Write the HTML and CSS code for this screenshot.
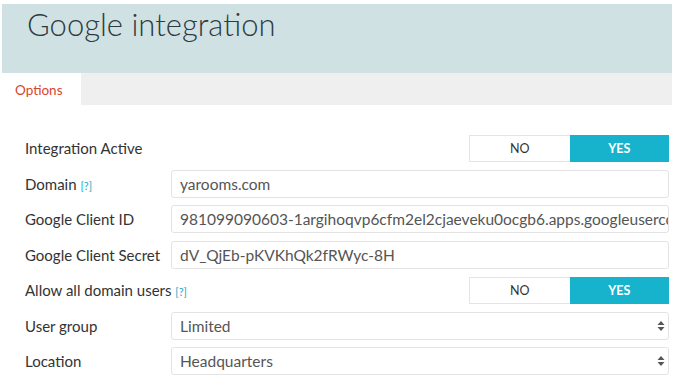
FILE: index.html
```html
<!DOCTYPE html>
<html>
<head>
<meta charset="utf-8">
<link rel="stylesheet" href="styles.css">
</head>
<body>
<div class="page">
  <div class="header"><h1>Google integration</h1></div>
  <div class="tabs"><div class="tab active">Options</div></div>
  <div class="form">
    <div class="row">
      <div class="label">Integration Active</div>
      <div class="field right"><div class="toggle"><span class="no">NO</span><span class="yes">YES</span></div></div>
    </div>
    <div class="row">
      <div class="label">Domain <span class="help">[?]</span></div>
      <div class="field"><div class="input">yarooms.com</div></div>
    </div>
    <div class="row">
      <div class="label">Google Client ID</div>
      <div class="field"><div class="input">981099090603-1argihoqvp6cfm2el2cjaeveku0ocgb6.apps.googleusercontent.com</div></div>
    </div>
    <div class="row">
      <div class="label">Google Client Secret</div>
      <div class="field"><div class="input">dV_QjEb-pKVKhQk2fRWyc-8H</div></div>
    </div>
    <div class="row">
      <div class="label">Allow all domain users <span class="help">[?]</span></div>
      <div class="field right"><div class="toggle"><span class="no">NO</span><span class="yes">YES</span></div></div>
    </div>
    <div class="row">
      <div class="label">User group</div>
      <div class="field"><div class="input select">Limited<svg class="arrows" width="8" height="12" viewBox="0 0 8 12"><path d="M4 1 L7.5 5 L0.5 5 Z M4 11 L7.5 7 L0.5 7 Z" fill="#555"/></svg></div></div>
    </div>
    <div class="row">
      <div class="label">Location</div>
      <div class="field"><div class="input select">Headquarters<svg class="arrows" width="8" height="12" viewBox="0 0 8 12"><path d="M4 1 L7.5 5 L0.5 5 Z M4 11 L7.5 7 L0.5 7 Z" fill="#555"/></svg></div></div>
    </div>
  </div>
</div>
</body>
</html>
```
FILE: styles.css
```css
html, body { margin: 0; padding: 0; background: #fff; }
body { font-family: Lato, "Open Sans", sans-serif; color: #333; }
.page { padding: 4px 2px 0 2px; width: 670px; }
.header { background: #d0e1e4; height: 69px; }
.header h1 { margin: 0; padding: 2px 0 0 25px; font-weight: 300; font-size: 31px; line-height: 36px; color: #2e3a40; letter-spacing: 0; }
.tabs { background: #efeff0; height: 32px; display: flex; }
.tab { width: 79px; background: #fff; color: #d9452b; font-size: 13.5px; line-height: 34px; padding-left: 13px; box-sizing: border-box; }
.form { padding: 29px 3px 0 23px; display: flex; flex-direction: column; gap: 7.5px; }
.row { display: flex; align-items: center; height: 28px; }
.label { width: 146px; font-size: 15px; color: #333; white-space: nowrap; }
.help { color: #17a9c4; font-size: 11px; }
.field { flex: 1; min-width: 0; display: flex; }
.field.right { justify-content: flex-end; }
.toggle { display: flex; width: 200px; height: 27px; font-size: 12.5px; }
.toggle span { flex: 1; display: flex; align-items: center; justify-content: center; box-sizing: border-box; }
.toggle .no { border: 1px solid #e4e4e4; border-right: none; color: #333; background: #fff; }
.toggle .yes { background: #17b3cc; color: #fff; font-weight: 700; }
.input { flex: 1; min-width: 0; height: 28px; box-sizing: border-box; border: 1px solid #e3e3e3; border-radius: 3px; font-size: 15.5px; color: #555; padding: 0 8px; line-height: 26px; white-space: nowrap; overflow: hidden; position: relative; }
.select { padding-right: 24px; }
.arrows { position: absolute; right: 3px; top: 7px; }
```
